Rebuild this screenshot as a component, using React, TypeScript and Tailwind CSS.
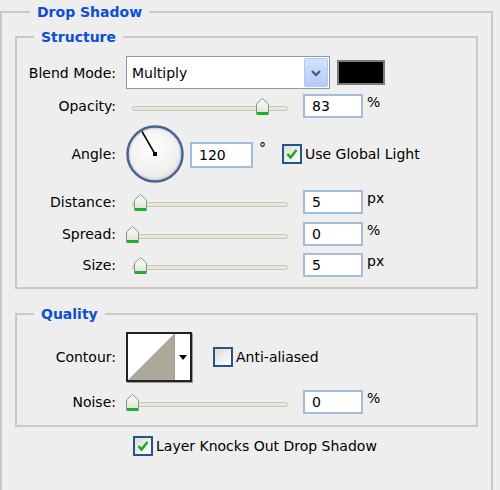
import React from "react";

interface ISliderProps {
  pos: number;
}

const Thumb = ({ left }: { left: number }) => (
  <svg
    width="15"
    height="19"
    viewBox="0 0 15 19"
    className="absolute top-[3px]"
    style={{ left }}
  >
    <defs>
      <linearGradient id="thumbFill" x1="0" y1="0" x2="0" y2="1">
        <stop offset="0" stopColor="#ffffff" />
        <stop offset="1" stopColor="#e2e2da" />
      </linearGradient>
    </defs>
    <polygon
      points="1.5,7 7.5,1.5 13.5,7 13.5,16 1.5,16"
      fill="url(#thumbFill)"
      stroke="#7f9a80"
      strokeWidth="1"
    />
    <rect x="1.5" y="15" width="12" height="3" fill="#22ad2c" />
  </svg>
);

const Slider = ({ pos }: ISliderProps) => (
  <div className="relative ml-[6px] h-[24px] w-[156px]">
    <div className="absolute left-0 right-0 top-[12px] h-[5px] rounded-full border border-[#c7c4b7] bg-[#e8e6de]" />
    <Thumb left={pos - 7} />
  </div>
);

const NumBox = ({ value, className = "" }: { value: string; className?: string }) => (
  <div
    className={`flex items-center border-2 border-[#a4bcd8] bg-white pl-[7px] ${className}`}
  >
    {value}
  </div>
);

const Check = ({ checked }: { checked: boolean }) => (
  <div className="flex h-[20px] w-[20px] items-center justify-center border-2 border-[#23558a] bg-gradient-to-br from-[#dcdcd4] to-white">
    {checked && (
      <svg width="14" height="14" viewBox="0 0 14 14">
        <path d="M2.5 7 L5.5 10.5 L11.5 3" fill="none" stroke="#21a52a" strokeWidth="2.6" />
      </svg>
    )}
  </div>
);

const Label = ({ text }: { text: string }) => (
  <div className="w-[100px] shrink-0 pr-[1px] text-right">{text}</div>
);

const Unit = ({ text }: { text: string }) => (
  <span className="ml-[4px] self-start leading-[16px]">{text}</span>
);

const SliderRow = ({
  label,
  pos,
  value,
  unit,
  className = "",
}: {
  label: string;
  pos: number;
  value: string;
  unit: string;
  className?: string;
}) => (
  <div className={`flex h-[24px] items-center ${className}`}>
    <Label text={label} />
    <div className="ml-[9px] flex h-full items-center">
      <Slider pos={pos} />
      <NumBox value={value} className="ml-[15px] h-[24px] w-[60px]" />
      <Unit text={unit} />
    </div>
  </div>
);

const Dial = () => (
  <svg width="60" height="60" viewBox="0 0 60 60">
    <defs>
      <radialGradient id="dialFill" cx="0.45" cy="0.4" r="0.6">
        <stop offset="0" stopColor="#ffffff" />
        <stop offset="0.8" stopColor="#efefed" />
        <stop offset="1" stopColor="#dcdcd8" />
      </radialGradient>
    </defs>
    <circle cx="30" cy="30" r="27.5" fill="url(#dialFill)" stroke="#4b6291" strokeWidth="2.5" />
    <circle cx="30" cy="30" r="25.5" fill="none" stroke="#c9cfdc" strokeWidth="1" />
    <line x1="30" y1="30" x2="17" y2="7.5" stroke="#000" strokeWidth="1.5" />
    <rect x="28" y="28" width="4" height="4" fill="#000" />
  </svg>
);

const Legend = ({ text }: { text: string }) => (
  <legend className="ml-[17px] px-[7px] text-[14px] font-bold leading-[20px] text-[#0c4ed6]">
    {text}
  </legend>
);

export default function App() {
  return (
    <div className="h-[490px] w-[500px] overflow-hidden bg-[#eeeeee] font-['DejaVu_Sans',Verdana,sans-serif] text-[14px] leading-[20px] text-black">
      <fieldset className="mt-[2px] h-[520px] w-[493px] border-2 border-[#cbc8bc] px-[13px]">
        <legend className="ml-[15px] px-[7px] text-[14px] font-bold leading-[20px] text-[#0c4ed6]">
          Drop Shadow
        </legend>

        {/* Structure */}
        <fieldset className="mt-[5px] border-2 border-[#cbc8bc] pb-[10px] pt-[9px]">
          <Legend text="Structure" />

          <div className="flex h-[33px] items-center">
            <Label text="Blend Mode:" />
            <div className="ml-[9px] flex h-full w-[204px] items-center border border-[#7f9db9] bg-white pl-[5px] pr-[1px]">
              <span className="flex-1">Multiply</span>
              <div className="flex h-[29px] w-[24px] items-center justify-center rounded-[2px] border border-[#b3c7f0] bg-gradient-to-b from-[#d6e2fc] to-[#b5cbf8]">
                <svg width="14" height="14" viewBox="0 0 14 14">
                  <path d="M3 5 L7 9 L11 5" fill="none" stroke="#4b5f87" strokeWidth="2.4" />
                </svg>
              </div>
            </div>
            <div className="ml-[7px] h-[25px] w-[48px] border-2 border-[#7d7d7d] bg-black" />
          </div>

          <SliderRow label="Opacity:" pos={130} value="83" unit="%" className="mt-[5px]" />

          <div className="mt-[7px] flex h-[58px] items-center">
            <Label text="Angle:" />
            <div className="ml-[8px] flex items-center">
              <Dial />
              <NumBox value="120" className="ml-[5px] mt-[1px] h-[26px] w-[63px]" />
              <span className="ml-[6px] -mt-[12px]">°</span>
              <div className="ml-[16px] flex items-center">
                <Check checked />
                <span className="ml-[3px]">Use Global Light</span>
              </div>
            </div>
          </div>

          <SliderRow label="Distance:" pos={8} value="5" unit="px" className="mt-[7px]" />
          <SliderRow label="Spread:" pos={0} value="0" unit="%" className="mt-[8px]" />
          <SliderRow label="Size:" pos={8} value="5" unit="px" className="mt-[7px]" />
        </fieldset>

        {/* Quality */}
        <fieldset className="mt-[15px] border-2 border-[#cbc8bc] pb-[11px] pt-[8px]">
          <Legend text="Quality" />

          <div className="flex h-[50px] items-center">
            <Label text="Contour:" />
            <div className="ml-[9px] flex h-[50px] w-[66px] border-2 border-[#222] bg-white shadow-[1px_1px_0_#9a9a9a]">
              <svg width="46" height="46" viewBox="0 0 46 46" className="block">
                <polygon points="0,46 46,0 46,46" fill="#aca89a" />
              </svg>
              <div className="flex flex-1 items-center justify-center border-l border-[#9c9c9c]">
                <svg width="8" height="5" viewBox="0 0 8 5">
                  <polygon points="0,0 8,0 4,5" fill="#000" />
                </svg>
              </div>
            </div>
            <div className="ml-[21px] flex items-center">
              <Check checked={false} />
              <span className="ml-[3px]">Anti-aliased</span>
            </div>
          </div>

          <SliderRow label="Noise:" pos={0} value="0" unit="%" className="mt-[8px]" />
        </fieldset>

        <div className="ml-[118px] mt-[9px] flex items-center">
          <Check checked />
          <span className="ml-[3px]">Layer Knocks Out Drop Shadow</span>
        </div>
      </fieldset>
    </div>
  );
}
